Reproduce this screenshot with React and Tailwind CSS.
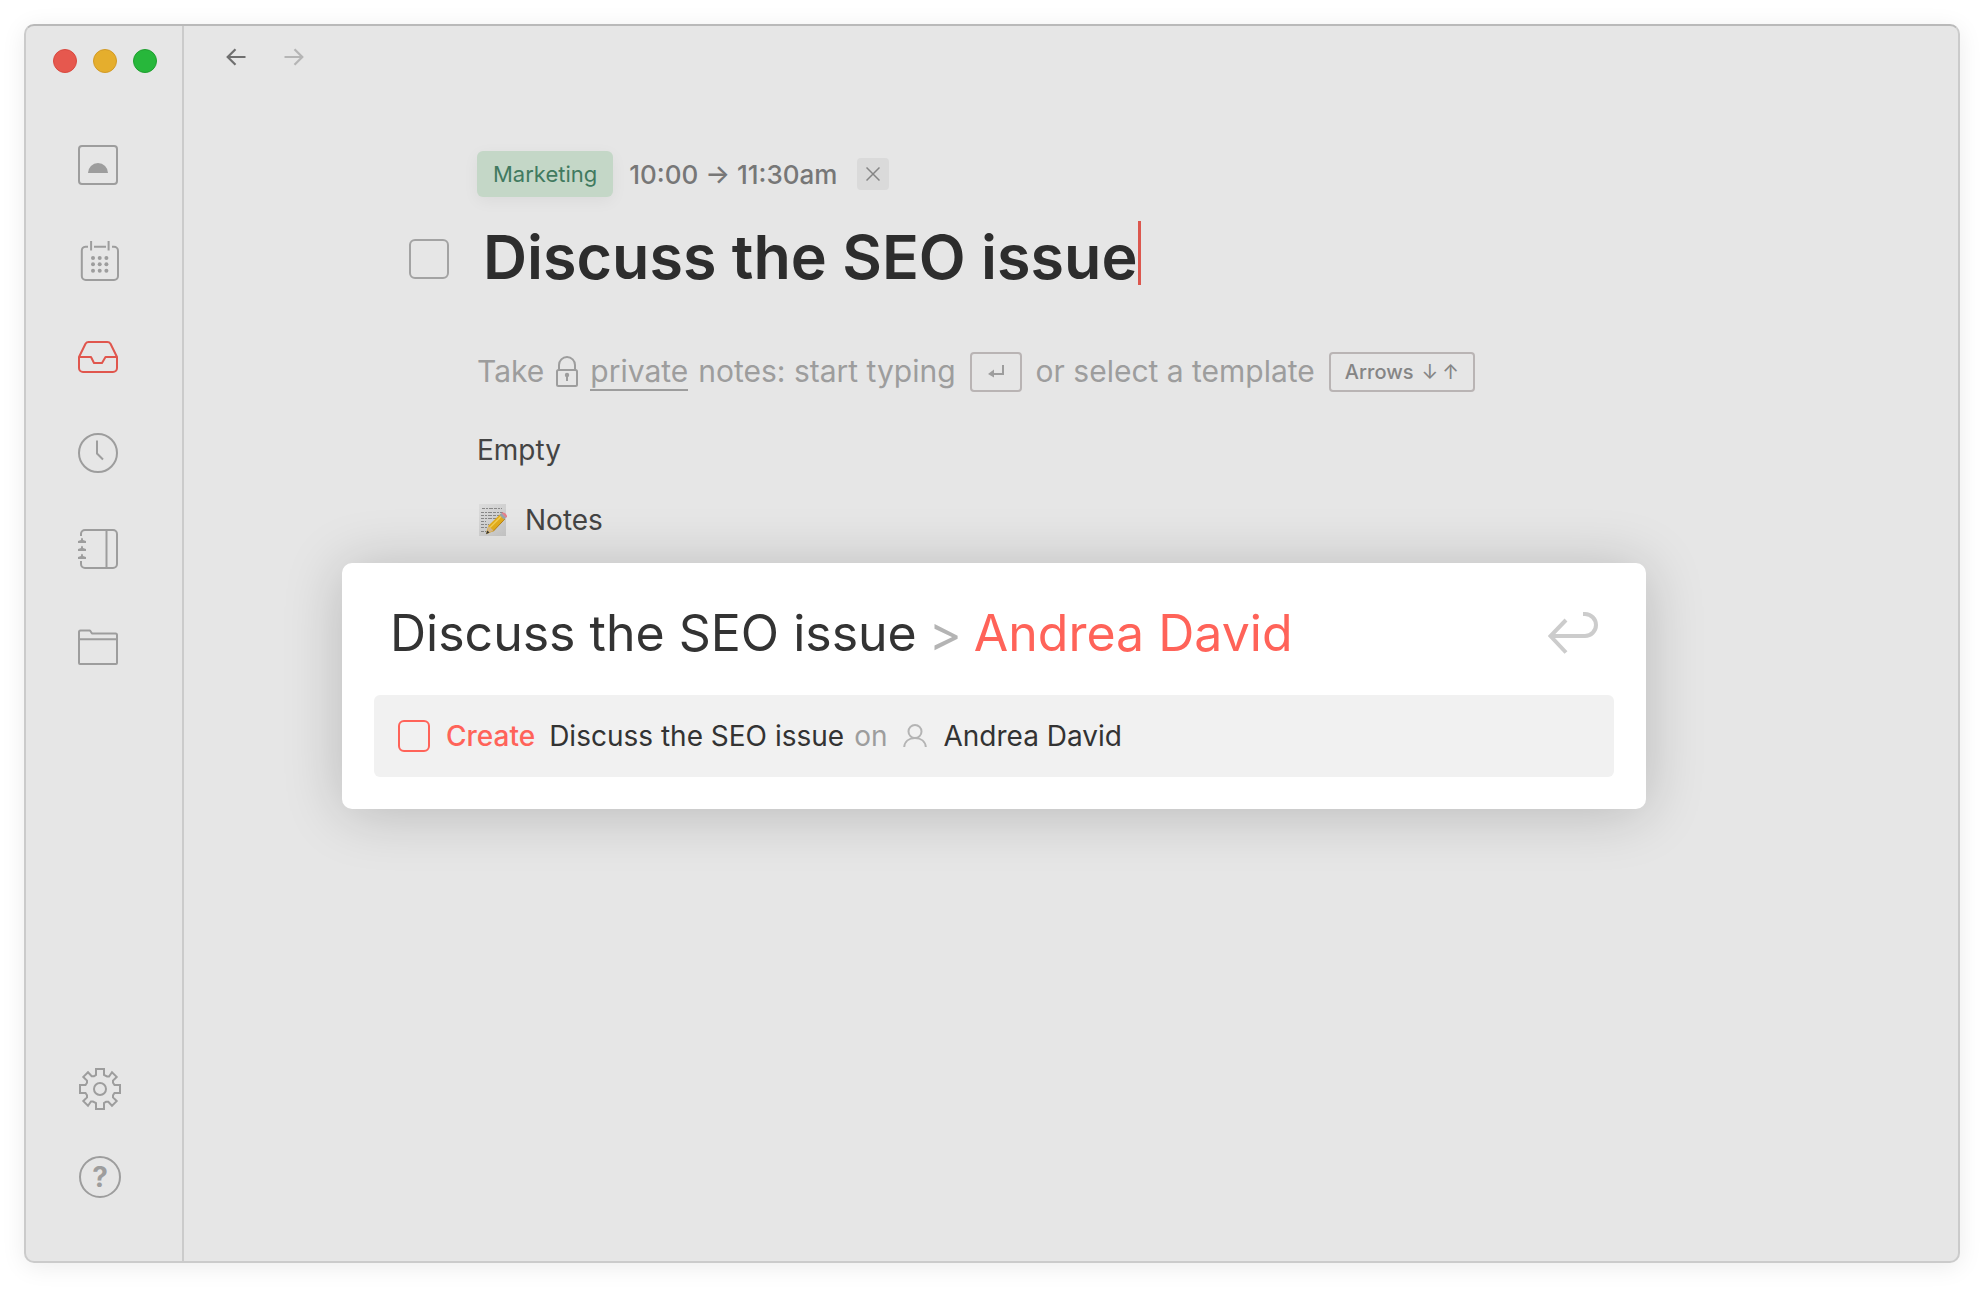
import { useState } from "react"

const navItems = [
  { id: "today", label: "Today", Icon: TodayIcon },
  { id: "calendar", label: "Calendar", Icon: CalendarIcon },
  { id: "inbox", label: "Inbox", Icon: InboxIcon },
  { id: "recent", label: "Recent", Icon: ClockIcon },
  { id: "contacts", label: "Contacts", Icon: NotebookIcon },
  { id: "folders", label: "Folders", Icon: FolderIcon },
]

function TodayIcon() {
  return (
    <svg width="40" height="40" viewBox="0 0 40 40" fill="none" stroke="currentColor" strokeWidth="2">
      <rect x="1" y="1" width="38" height="38" rx="3" />
      <path d="M10 28a10 10 0 0 1 20 0z" fill="currentColor" stroke="none" />
    </svg>
  )
}

function CalendarIcon() {
  return (
    <svg className="overflow-visible" width="40" height="40" viewBox="0 0 40 40" fill="none" stroke="currentColor" strokeWidth="2">
      <path d="M10 5.7H7.5a4 4 0 0 0-3.700 4V35a4 4 0 0 0 4 4H36a4 4 0 0 0 4-4V9.7a4 4 0 0 0-4-4h-2M16 5.7h12M13.100 0v9.500M30.600 0v9.500" />
      <g fill="currentColor" stroke="none">
        {[17, 23.3, 29.7].map((y) =>
          [15, 21.7, 28.4].map((x) => <circle key={`${x}-${y}`} cx={x} cy={y} r="2" />)
        )}
      </g>
    </svg>
  )
}

function InboxIcon() {
  return (
    <svg width="40" height="40" viewBox="0 0 40 40" fill="none" stroke="currentColor" strokeWidth="2" strokeLinejoin="round">
      <path d="M1 20v11a4 4 0 0 0 4 4h30a4 4 0 0 0 4-4V20L32.5 6.7A4 4 0 0 0 29.4 5H10.600a4 4 0 0 0-3.100 1.700L1 20h12l3 6h8l3.500-6H39" />
    </svg>
  )
}

function ClockIcon() {
  return (
    <svg width="40" height="40" viewBox="0 0 40 40" fill="none" stroke="currentColor" strokeWidth="2">
      <circle cx="20" cy="20" r="19" />
      <path d="M19 7.5V20.500l6 6" />
    </svg>
  )
}

function NotebookIcon() {
  return (
    <svg width="40" height="40" viewBox="0 0 40 40" fill="none" stroke="currentColor" strokeWidth="2">
      <path d="M3 7V5a4 4 0 0 1 4-4h28a4 4 0 0 1 4 4v30a4 4 0 0 1-4 4H7a4 4 0 0 1-4-4v-3M28.500 1v38" />
      <g fill="currentColor" stroke="none">
        <path d="M0 14v-2l3-1c0-3 2-3 2 0l3 1v2z" />
        <path d="M0 22v-2l3-1c0-3 2-3 2 0l3 1v2z" />
        <path d="M0 30v-2l3-1c0-3 2-3 2 0l3 1v2z" />
      </g>
    </svg>
  )
}

function FolderIcon() {
  return (
    <svg width="40" height="40" viewBox="0 0 40 40" fill="none" stroke="currentColor" strokeWidth="2" strokeLinejoin="round">
      <path d="M1 38V7a1.500 1.500 0 0 1 1.500-1.500H12l2 3H37.500A1.500 1.500 0 0 1 39 10v28a1 1 0 0 1-1 1H2a1 1 0 0 1-1-1zM1 14.300h38" />
    </svg>
  )
}

function GearIcon() {
  return (
    <svg width="42" height="42" viewBox="0 0 42 42" fill="none" stroke="currentColor" strokeWidth="2">
      <circle cx="21" cy="21" r="6" />
      <path d="M17 1h8v6l3 1.500h2L33 4.200l4.700 4.700L34 12.600v2.200L35.500 17H41v8h-5.500L34 27.200v2.200l3.700 3.700-4.700 4.700-3.700-4H27L25 35v6h-8v-6l-3-1.500h-2L9 37.800l-4.700-4.700L8 29.400v-2.200L6.500 25H1v-8h5.500L8 14.800v-2.200L4.300 8.900 9 4.200l3.700 4H15L17 7z" />
    </svg>
  )
}

function ArrowIcon({ className }) {
  return (
    <svg className={className} width="20" height="18" viewBox="0 0 20 18" fill="none" stroke="currentColor" strokeWidth="2.2">
      <path d="M19.500 9H2M9.500 1.200 1.700 9l7.800 7.800" />
    </svg>
  )
}

function LockIcon() {
  return (
    <svg width="22" height="32" viewBox="0 0 22 32" fill="none" stroke="currentColor" strokeWidth="2">
      <rect x="1" y="14" width="20" height="16" rx="1.5" />
      <path d="M3 14V9a8 8 0 0 1 16 0v5" />
      <circle cx="11" cy="19" r="2.2" fill="currentColor" stroke="none" />
      <path d="M11 19v6" />
    </svg>
  )
}

function MemoIcon() {
  return (
    <svg width="30" height="34" viewBox="0 0 30 34">
      <defs>
        <linearGradient id="paper" x1="0" y1="0" x2="1" y2="1">
          <stop offset="0" stopColor="#dcdcdc" />
          <stop offset="1" stopColor="#c6c6c6" />
        </linearGradient>
      </defs>
      <rect x="2" y="1" width="27" height="32" fill="url(#paper)" />
      <g stroke="#888" strokeWidth="1" strokeDasharray="3 1 2 1 4 1">
        <path d="M5 5.500h20M4 9.500h22M4 12.500h20M4 15.500h16M4 18.500h5M4 21.500h8M4 24.500h6M4 28.500h5" />
      </g>
      <path d="M9.500 28.500l2-6L23.500 11l4.500 4.500L16.500 28l-6.500 3z" fill="#e2ad1c" />
      <path d="M13 24.500 25 12.500" stroke="#f3cf51" strokeWidth="1.5" />
      <path d="M16 28.500 27.800 16" stroke="#b87f12" strokeWidth="1" />
      <path d="M11.500 23l5 4.500-7 3.300z" fill="#d9b989" />
      <path d="M10.200 27.500 12.500 29.500l-3.500 1.700z" fill="#3b3733" />
      <path d="M22.500 12l2-2 4.500 4.500-2 2z" fill="#9aa4ab" />
      <path d="M24.500 10c2-1.500 6 1.500 5.500 4l-1 .8z" fill="#e5808a" />
    </svg>
  )
}

function PersonIcon() {
  return (
    <svg width="24" height="24" viewBox="0 0 24 24" fill="none" stroke="currentColor" strokeWidth="2">
      <circle cx="12" cy="7.5" r="6.5" />
      <path d="M1.200 23C1.700 17.500 6 14 12 14s10.300 3.500 10.800 9" />
    </svg>
  )
}

function Sidebar({ active, onSelect }) {
  return (
    <aside className="flex w-[158px] shrink-0 flex-col border-r-2 border-[#cbcbcb] text-[#9d9d9d]">
      <div className="flex gap-4 pt-[23px] pl-[27px]">
        <button aria-label="Close" className="size-6 rounded-full border border-[#d9493f] bg-[#e6584e]" />
        <button aria-label="Minimize" className="size-6 rounded-full border border-[#d29a26] bg-[#e5ae2d]" />
        <button aria-label="Zoom" className="size-6 rounded-full border border-[#1f9f2f] bg-[#27b73b]" />
      </div>
      <nav className="flex flex-col items-start gap-14 pt-18 pl-[52px]">
        {navItems.map(({ id, label, Icon }) => (
          <button
            key={id}
            aria-label={label}
            onClick={() => onSelect(id)}
            className={id === active ? "text-[#e0564d]" : ""}
          >
            <Icon />
          </button>
        ))}
      </nav>
      <div className="mt-auto flex flex-col items-start gap-[46px] pb-[63px] pl-[53px]">
        <button aria-label="Settings">
          <GearIcon />
        </button>
        <button aria-label="Help" className="size-[42px] rounded-full border-2 border-[#9d9d9d] text-[28px] leading-9 font-bold">
          ?
        </button>
      </div>
    </aside>
  )
}

function QuickCreate() {
  return (
    <div role="dialog" aria-label="Quick create" className="w-full max-w-[1304px] rounded-[10px] bg-white p-8 shadow-[0_4px_60px_rgba(0,0,0,0.2)]">
      <div className="flex items-center justify-between px-4 text-[50px] leading-[76px] text-[#333]">
        <p className="flex gap-3">
          <span>Discuss the SEO issue</span>
          <span className="text-[#b4b4b4]">&gt;</span>
          <span className="text-[#ff6359]">Andrea David</span>
        </p>
        <button aria-label="Confirm" className="text-[#ccc]">
          <svg width="50" height="42" viewBox="0 0 50 42" fill="none" stroke="currentColor" strokeWidth="4">
            <path d="M35 2h2a11 11 0 0 1 0 22H3M18 8 2.500 24 18 40.500" />
          </svg>
        </button>
      </div>
      <label className="mt-6 flex h-[82px] items-center rounded-md bg-[#f1f1f1] px-6 text-[28px] text-[#333]">
        <input type="checkbox" className="size-8 appearance-none rounded-md border-2 border-[#ff6359]" />
        <span className="ml-4 font-medium text-[#ff6359]">Create</span>
        <span className="ml-3.5">Discuss the SEO issue</span>
        <span className="ml-2.5 text-[#9d9d9d]">on</span>
        <span className="mx-4 text-[#b4b4b4]">
          <PersonIcon />
        </span>
        <span>Andrea David</span>
      </label>
    </div>
  )
}

export default function App() {
  const [active, setActive] = useState("inbox")
  const [title, setTitle] = useState("Discuss the SEO issue")

  return (
    <div className="flex min-h-screen bg-white px-6 pt-6 pb-[26px] font-['Inter',sans-serif]">
      <div className="relative flex flex-1 rounded-[10px] border-2 border-[#cbcbcb] border-t-[#b9b9b9] bg-[#e6e6e6] shadow-[0_4px_24px_rgba(0,0,0,0.08)]">
        <Sidebar active={active} onSelect={setActive} />

        <main className="flex-1">
          <div className="flex gap-[38px] pt-[22px] pl-[42px]">
            <button aria-label="Back" className="text-[#6f6f6f]">
              <ArrowIcon />
            </button>
            <button aria-label="Forward" className="text-[#b5b5b5]">
              <ArrowIcon className="rotate-180" />
            </button>
          </div>

          <div className="pt-[85px] pl-[225px]">
            <div className="flex items-center pl-17">
              <span className="flex h-[46px] items-center rounded-md bg-[#c4d7c7] px-4 text-[22px] text-[#417a5f] shadow-[0_4px_16px_rgba(0,0,0,0.05)]">
                Marketing
              </span>
              <span className="ml-4 text-[26px] font-medium text-[#777]">10:00 → 11:30am</span>
              <button aria-label="Remove time" className="ml-5 flex size-8 items-center justify-center rounded bg-[#dadada] text-[#858585]">
                <svg width="14" height="14" viewBox="0 0 14 14" stroke="currentColor" strokeWidth="1.5">
                  <path d="M.5.5l13 13M13.500.5l-13 13" />
                </svg>
              </button>
            </div>

            <div className="mt-6 flex items-start">
              <input type="checkbox" aria-label="Done" className="mt-[18px] size-10 appearance-none rounded-md border-2 border-[#a3a3a3]" />
              <input
                aria-label="Task title"
                value={title}
                onChange={(e) => setTitle(e.target.value)}
                className="ml-[34px] field-sizing-content text-[61px] leading-[72px] font-semibold text-[#2d2d2d] caret-[#dc574e] outline-none"
              />
              <span className="h-16 w-[3px] bg-[#dc574e]" />
            </div>

            <div className="mt-14 flex items-center pl-17 text-[30px] text-[#9d9d9d]">
              <span>Take</span>
              <span className="mx-3">
                <LockIcon />
              </span>
              <a href="#private" className="border-b-2 border-[#9d9d9d] leading-9">
                private
              </a>
              <span className="ml-2.5">notes: start typing</span>
              <kbd className="mx-3.5 flex h-10 w-[52px] items-center justify-center rounded border-2 border-[#b9b4b4]">
                <svg width="16" height="14" viewBox="0 0 16 14" fill="none" stroke="currentColor" strokeWidth="2">
                  <path d="M15 0v9H3" />
                  <path d="M6 4.500v8L0 9z" fill="currentColor" stroke="none" />
                </svg>
              </kbd>
              <span>or select a template</span>
              <kbd className="ml-3.5 flex h-10 items-center gap-2 rounded border-2 border-[#b9b4b4] px-3.5 font-['Inter',sans-serif] text-xl font-medium text-[#858585]">
                <span>Arrows</span>
                <span className="flex gap-1 font-normal">
                  <span>↓</span>
                  <span>↑</span>
                </span>
              </kbd>
            </div>

            <div className="flex flex-col items-start gap-7 pt-[35px] pl-17 text-[28px] leading-[42px] text-[#444]">
              <button>Empty</button>
              <button className="flex items-center gap-[18px]">
                <MemoIcon />
                Notes
              </button>
            </div>
          </div>
        </main>

        <div className="absolute inset-0 flex items-start justify-center pt-[537px] pl-1">
          <QuickCreate />
        </div>
      </div>
    </div>
  )
}
